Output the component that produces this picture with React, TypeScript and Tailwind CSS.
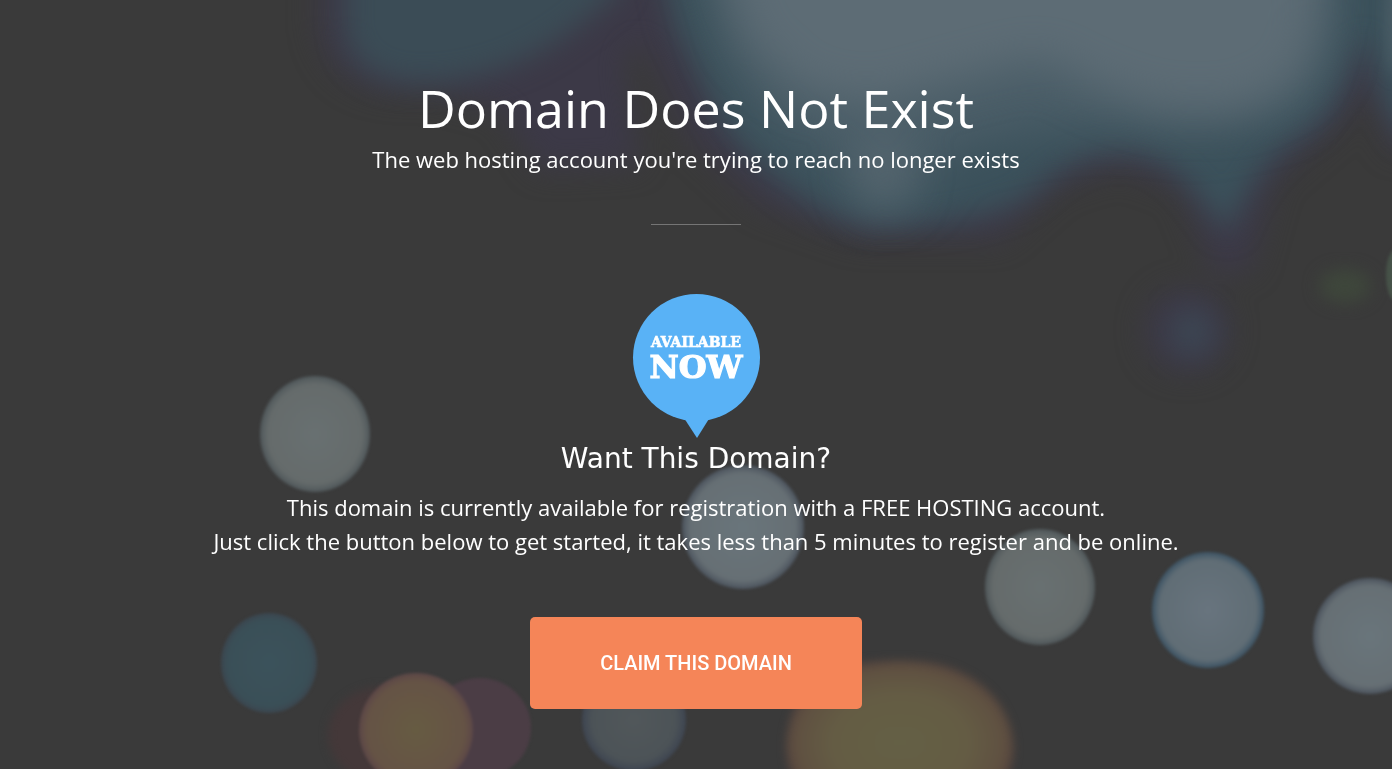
const lights = [
  { cx: 315, cy: 434, rx: 55, ry: 58, fill: "url(#grey)" },
  { cx: 743, cy: 527, rx: 61, ry: 62, fill: "url(#silver)" },
  { cx: 1040, cy: 587, rx: 55, ry: 58, fill: "url(#grey)" },
  { cx: 1208, cy: 610, rx: 56, ry: 58, fill: "url(#blue)" },
  { cx: 1370, cy: 636, rx: 57, ry: 58, fill: "url(#silver)" },
  { cx: 269, cy: 663, rx: 48, ry: 50, fill: "url(#teal)" },
  { cx: 634, cy: 720, rx: 52, ry: 51, fill: "url(#slate)" },
];

function Backdrop() {
  return (
    <svg
      aria-hidden="true"
      className="absolute inset-0 h-full w-full"
      viewBox="0 0 1392 769"
      preserveAspectRatio="xMidYMid slice"
    >
      <defs>
        <filter id="soft" x="-20%" y="-20%" width="140%" height="140%" colorInterpolationFilters="sRGB">
          <feGaussianBlur stdDeviation="1.5" />
        </filter>
        <filter id="blur4" x="-20%" y="-20%" width="140%" height="140%" colorInterpolationFilters="sRGB">
          <feGaussianBlur stdDeviation="4" />
        </filter>
        <filter id="blur8" x="-50%" y="-50%" width="200%" height="200%" colorInterpolationFilters="sRGB">
          <feGaussianBlur stdDeviation="8" />
        </filter>
        <filter id="blur14" x="-50%" y="-50%" width="200%" height="200%" colorInterpolationFilters="sRGB">
          <feGaussianBlur stdDeviation="14" />
        </filter>
        <filter id="blur22" x="-50%" y="-50%" width="200%" height="200%" colorInterpolationFilters="sRGB">
          <feGaussianBlur stdDeviation="22" />
        </filter>
        <radialGradient id="grey">
          <stop offset="0" stopColor="#687071" />
          <stop offset="0.85" stopColor="#656b6b" />
          <stop offset="1" stopColor="#50585b" />
        </radialGradient>
        <radialGradient id="silver">
          <stop offset="0" stopColor="#69757b" />
          <stop offset="0.86" stopColor="#666f74" />
          <stop offset="1" stopColor="#4c545e" />
        </radialGradient>
        <radialGradient id="blue">
          <stop offset="0" stopColor="#68747e" />
          <stop offset="0.86" stopColor="#606d75" />
          <stop offset="1" stopColor="#3c5364" />
        </radialGradient>
        <radialGradient id="teal">
          <stop offset="0" stopColor="#3b525b" />
          <stop offset="0.85" stopColor="#3a4f57" />
          <stop offset="1" stopColor="#3b464f" />
        </radialGradient>
        <radialGradient id="slate">
          <stop offset="0" stopColor="#51575a" />
          <stop offset="0.8" stopColor="#4c5357" />
          <stop offset="1" stopColor="#3e4551" />
        </radialGradient>
        <radialGradient id="amber">
          <stop offset="0" stopColor="#665b42" />
          <stop offset="0.85" stopColor="#655345" />
          <stop offset="1" stopColor="#5c4747" />
        </radialGradient>
        <radialGradient id="olive" r="0.54">
          <stop offset="0" stopColor="#646045" />
          <stop offset="0.55" stopColor="#645c44" />
          <stop offset="0.85" stopColor="#5f5041" />
          <stop offset="1" stopColor="#4f3b3c" />
        </radialGradient>
      </defs>

      {/* purple fringes */}
      <g fill="#3c3947" filter="url(#blur14)">
        <path d="M318-60V30C330 80 370 98 430 92L500 110L540 170L640 165L625 60L640 40L690 140L760 205L860 240L1000 240L1060 187L1120 168L1180 190L1215 275L1250 270L1275 180L1345 120L1366 85L1392 150L1440 150V-60Z" />
        <ellipse cx="1187" cy="330" rx="42" ry="42" />
      </g>

      {/* window glow */}
      <path
        fill="#3b4c56"
        filter="url(#blur14)"
        d="M345-60V30C352 78 400 88 455 80C520 68 560 45 620-10V-60Z"
      />
      <path
        fill="#3b515b"
        filter="url(#blur14)"
        d="M655-60L675 30C700 70 715 130 755 160C790 195 830 222 880 226C930 226 990 220 1030 195C1060 166 1090 150 1130 152C1180 158 1205 205 1228 235C1245 190 1265 155 1310 130C1345 105 1350 60 1365 35C1372 60 1380 110 1410 140L1440 120V-60Z"
      />
      <path
        fill="#4a5d67"
        filter="url(#blur22)"
        d="M690-80L725 50L765 120L835 165L865 205L910 205L950 150L1040 130L1120 125L1200 135L1290 115L1330 60L1335-80Z"
      />
      <g fill="#5d6c75" filter="url(#blur22)">
        <path d="M710-80L745 40L800 90L870 105L960 80L1040 60L1100 90L1160 110L1240 110L1300 80L1320 20V-80Z" />
        <ellipse cx="882" cy="170" rx="26" ry="40" opacity="0.6" />
      </g>
      <ellipse cx="1396" cy="20" rx="10" ry="55" fill="#4b5d66" filter="url(#blur8)" />
      <ellipse cx="1192" cy="332" rx="22" ry="24" fill="#3c4653" filter="url(#blur14)" />
      <ellipse cx="1345" cy="286" rx="26" ry="17" fill="#3e463b" filter="url(#blur8)" />
      <ellipse cx="1396" cy="275" rx="10" ry="26" fill="#465248" filter="url(#soft)" />

      {/* street lights */}
      <ellipse cx="382" cy="735" rx="54" ry="48" fill="#443839" filter="url(#blur4)" />
      <g filter="url(#soft)">
        <ellipse cx="480" cy="728" rx="51" ry="50" fill="#4b3d45" />
        <ellipse cx="416" cy="730" rx="57" ry="57" fill="url(#amber)" />
        {lights.map((light) => (
          <ellipse key={light.cx} {...light} />
        ))}
      </g>
      <path
        fill="url(#olive)"
        filter="url(#blur4)"
        d="M786 745C788 705 810 672 850 664C880 660 920 658 945 666C985 678 1014 710 1014 750C1012 790 980 820 900 825C820 820 785 790 786 745Z"
      />
    </svg>
  );
}

function AvailableBadge() {
  return (
    <svg className="h-36 w-32" viewBox="0 0 128 144" role="img" aria-label="Available now">
      <circle cx="64.500" cy="63.500" r="63.500" fill="#59b2f6" />
      <path fill="#59b2f6" d="M52 124H77.500L65 144Z" />
      <g
        fill="#fff"
        stroke="#fff"
        textAnchor="middle"
        className="font-['DejaVu_Serif',serif] font-bold"
      >
        <text x="64" y="53" fontSize="14" strokeWidth="0.6">AVAILABLE</text>
        <text x="64" y="84" fontSize="32" strokeWidth="1.2">NOW</text>
      </g>
    </svg>
  );
}

export default function App() {
  return (
    <div className="relative min-h-screen overflow-hidden bg-[#3a3a3a] font-['Open_Sans',sans-serif] text-white">
      <Backdrop />

      <main className="relative flex flex-col items-center px-4 pt-[78px] pb-[60px] text-center">
        <h1 className="text-[52px] leading-[60px]">Domain Does Not Exist</h1>
        <p className="mt-1 text-[22px] leading-[34px]">
          The web hosting account you're trying to reach no longer exists
        </p>

        <hr className="mt-12 mb-[69px] w-[90px] border-t border-[#757575]" />

        <AvailableBadge />

        <h2 className="font-['DejaVu_Sans',sans-serif] text-[28px] leading-[42px]">Want This Domain?</h2>
        <p className="mt-[10px] text-[22px] leading-[34px]">
          This domain is currently available for registration with a FREE HOSTING account.
          <br />
          Just click the button below to get started, it takes less than 5 minutes to register and be online.
        </p>

        <a
          href="#"
          className="mt-[59px] rounded-[5px] bg-[#f58558] px-[70px] py-8 font-[Roboto,sans-serif] text-[20px] leading-7 font-medium hover:bg-[#f3753f]"
        >
          CLAIM THIS DOMAIN
        </a>
      </main>
    </div>
  );
}
